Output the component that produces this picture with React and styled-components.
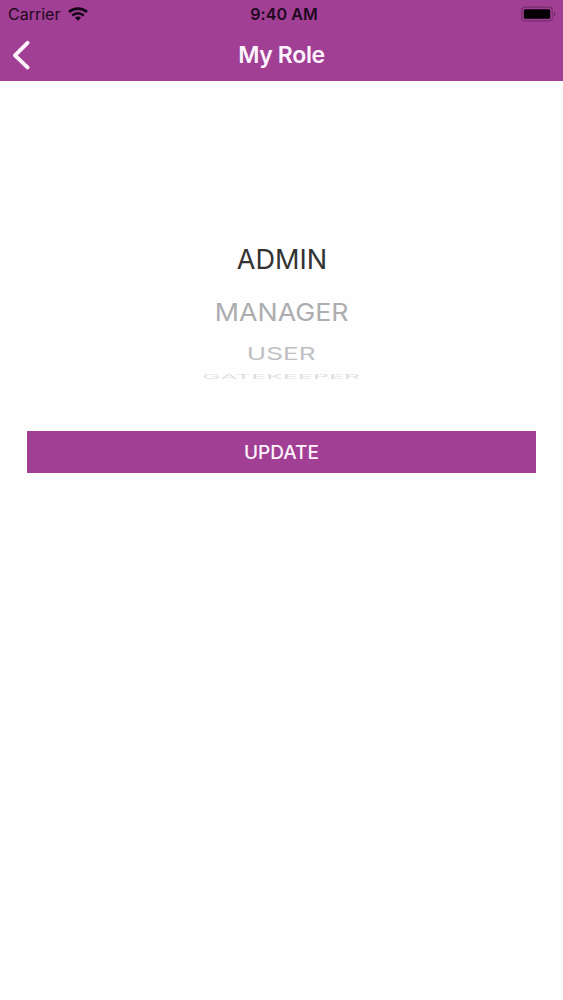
import React from "react";
import styled, { createGlobalStyle } from "styled-components";

const GlobalStyle = createGlobalStyle`
  * { box-sizing: border-box; }
  body { margin: 0; background: #fefefe; font-family: Inter, "Liberation Sans", sans-serif; }
`;

const Screen = styled.main`
  display: flex;
  flex-direction: column;
  height: 1000px;
  background: #fefefe;
`;

const Header = styled.header`
  height: 81px;
  background: #a03f94;
`;

const StatusBar = styled.div`
  display: grid;
  grid-template-columns: 1fr auto 1fr;
  align-items: center;
  height: 28px;
  padding: 0 7px 0 8px;
  color: #1f0820;
`;

const Carrier = styled.div`
  display: flex;
  align-items: center;
  gap: 8px;
  font-size: 16px;
  line-height: 28px;
`;

const Clock = styled.time`
  padding-left: 4px;
  font-size: 16px;
  font-weight: 600;
  line-height: 28px;
  letter-spacing: 0.1px;
`;

const BatterySlot = styled.div`
  display: flex;
  justify-content: flex-end;
`;

const NavBar = styled.nav`
  display: grid;
  grid-template-columns: 60px 1fr 60px;
  align-items: center;
  height: 51px;
`;

const BackButton = styled.button`
  display: flex;
  padding: 0 0 0 10px;
  border: 0;
  background: none;
`;

const Title = styled.h1`
  margin: 0;
  padding-top: 2px;
  color: #fdf3fc;
  font-size: 23px;
  font-weight: 600;
  line-height: 51px;
  letter-spacing: -0.35px;
  text-align: center;
`;

const Picker = styled.ul`
  display: flex;
  flex-direction: column;
  align-items: center;
  height: 350px;
  margin: 0;
  padding: 153px 0 0;
  list-style: none;
`;

const Option = styled.li`
  height: ${(p) => p.$height}px;
  color: ${(p) => p.$color};
  font-size: 27.5px;
  line-height: ${(p) => p.$height}px;
  white-space: nowrap;
  transform: scale(${(p) => p.$scaleX}, ${(p) => p.$scaleY});
`;

const UpdateButton = styled.button`
  height: 42px;
  margin: 0 27px;
  padding: 0;
  border: 0;
  background: #a03f94;
  color: #fdf3fc;
  font: 500 19px/43px Inter, "Liberation Sans", sans-serif;
`;

const roles = [
  { name: "ADMIN", height: 51, color: "#333", scaleX: 0.985, scaleY: 1 },
  { name: "MANAGER", height: 55, color: "#adadb0", scaleX: 0.975, scaleY: 0.9 },
  { name: "USER", height: 29, color: "#c0c0c3", scaleX: 0.95, scaleY: 0.61 },
  { name: "GATEKEEPER", height: 15, color: "#dededf", scaleX: 0.907, scaleY: 0.24 },
];

function WifiIcon() {
  return (
    <svg width="20" height="14" viewBox="0 0 20 14" fill="none" stroke="#150518" strokeWidth="2.7">
      <path d="M1 5C6 .6 14 .6 19 5" />
      <path d="M4.2 8.5c3.5-3 8.1-3 11.6 0" />
      <path d="M6.9 10.7c1.8-1.5 4.4-1.5 6.2 0L10 13.7Z" fill="#150518" stroke="none" />
    </svg>
  );
}

function BatteryIcon() {
  return (
    <svg width="36" height="16" viewBox="0 0 36 16" fill="none">
      <rect x="1.7" y="1.2" width="30.6" height="13.6" rx="3.5" stroke="#74306d" strokeWidth="1.2" />
      <rect x="3.8" y="3.2" width="26.4" height="9.6" rx="1.5" fill="#050006" />
      <path d="M34 5.8c1.7.7 1.7 3.7 0 4.4Z" fill="#632760" />
    </svg>
  );
}

function ChevronIcon() {
  return (
    <svg width="20" height="30" viewBox="0 0 20 30" fill="none">
      <path d="M17.5 2.8 5 15.3l12.5 12.1" stroke="#fdf3fc" strokeWidth="3.9" strokeLinecap="round" strokeLinejoin="round" />
    </svg>
  );
}

export default function App() {
  return (
    <Screen>
      <GlobalStyle />
      <Header>
        <StatusBar>
          <Carrier>Carrier <WifiIcon /></Carrier>
          <Clock>9:40 AM</Clock>
          <BatterySlot><BatteryIcon /></BatterySlot>
        </StatusBar>
        <NavBar>
          <BackButton aria-label="Back"><ChevronIcon /></BackButton>
          <Title>My Role</Title>
        </NavBar>
      </Header>
      <Picker>
        {roles.map((r) => (
          <Option key={r.name} $height={r.height} $color={r.color} $scaleX={r.scaleX} $scaleY={r.scaleY}>
            {r.name}
          </Option>
        ))}
      </Picker>
      <UpdateButton>UPDATE</UpdateButton>
    </Screen>
  );
}
